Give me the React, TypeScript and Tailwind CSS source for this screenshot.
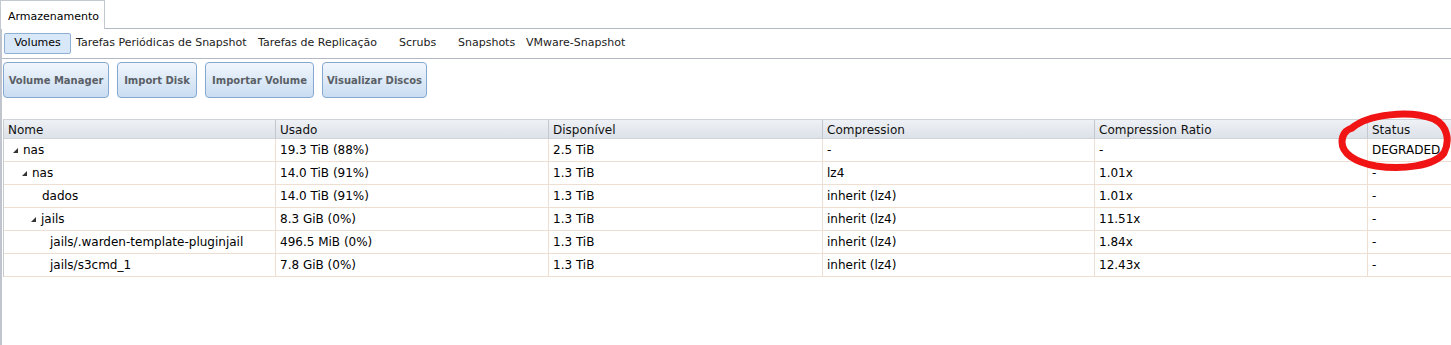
import React from 'react';

const subTabs = [
  { label: 'Tarefas Periódicas de Snapshot', w: 'w-[182px]' },
  { label: 'Tarefas de Replicação', w: 'w-[141px]' },
  { label: 'Scrubs', w: 'w-[59px]' },
  { label: 'Snapshots', w: 'w-[68px]' },
  { label: 'VMware-Snapshot', w: 'w-[110px]' },
];

const actions = [
  { label: 'Volume Manager', w: 'w-[106px]' },
  { label: 'Import Disk', w: 'w-[80px]' },
  { label: 'Importar Volume', w: 'w-[109px]' },
  { label: 'Visualizar Discos', w: 'w-[105px]' },
];

const columns = [
  { name: 'Nome', w: 'w-[272px]' },
  { name: 'Usado', w: 'w-[273px]' },
  { name: 'Disponível', w: 'w-[274px]' },
  { name: 'Compression', w: 'w-[272px]' },
  { name: 'Compression Ratio', w: 'w-[273px]' },
  { name: 'Status', w: 'flex-1' },
];

interface Row {
  name: string;
  pad: string;
  open?: boolean;
  cells: string[];
}

const rows: Row[] = [
  { name: 'nas', pad: 'pl-[8px]', open: true, cells: ['19.3 TiB (88%)', '2.5 TiB', '-', '-', 'DEGRADED'] },
  { name: 'nas', pad: 'pl-[17px]', open: true, cells: ['14.0 TiB (91%)', '1.3 TiB', 'lz4', '1.01x', '-'] },
  { name: 'dados', pad: 'pl-[38px]', cells: ['14.0 TiB (91%)', '1.3 TiB', 'inherit (lz4)', '1.01x', '-'] },
  { name: 'jails', pad: 'pl-[26px]', open: true, cells: ['8.3 GiB (0%)', '1.3 TiB', 'inherit (lz4)', '11.51x', '-'] },
  { name: 'jails/.warden-template-pluginjail', pad: 'pl-[46px]', cells: ['496.5 MiB (0%)', '1.3 TiB', 'inherit (lz4)', '1.84x', '-'] },
  { name: 'jails/s3cmd_1', pad: 'pl-[46px]', cells: ['7.8 GiB (0%)', '1.3 TiB', 'inherit (lz4)', '12.43x', '-'] },
];

function Expander() {
  return (
    <svg width="7" height="7" viewBox="0 0 7 7" className="mr-[4px] shrink-0">
      <path d="M6 1 L6 6 L1 6 Z" fill="#333" />
    </svg>
  );
}

export default function App() {
  return (
    <div className="relative w-[1451px] h-[345px] bg-white overflow-hidden text-[12px] text-black font-['DejaVu_Sans','Verdana',sans-serif]">
      {/* top tab strip */}
      <div className="h-[29px] flex items-end border-b border-[#b4b8c4]">
        <div className="h-[29px] w-[105px] -mb-px bg-white border border-b-0 border-[#c4c8d0] flex items-center pl-[7px] pt-[4px] text-[11px] whitespace-nowrap">
          Armazenamento
        </div>
      </div>

      <div className="border-l-2 border-[#c0c4cc] h-full">
        {/* sub tabs */}
        <div className="h-[30px] flex items-center pl-[2px] border-b border-[#b4b8c4] text-[11px] whitespace-nowrap">
          <div className="h-[21px] w-[67px] mr-[5px] flex items-center justify-center bg-[#d9e8f8] border border-[#8fb0d4] rounded-[2px]">
            Volumes
          </div>
          {subTabs.map((t) => (
            <div key={t.label} className={`${t.w} flex items-center justify-start text-[#222]`}>
              {t.label}
            </div>
          ))}
        </div>

        {/* action buttons */}
        <div className="flex gap-[8px] pl-[1px] pt-[3px] h-[60px]">
          {actions.map((a) => (
            <button
              key={a.label}
              className={`${a.w} h-[36px] rounded-[4px] border border-[#86a8d0] bg-gradient-to-b from-[#f1f6fc] to-[#c9ddf2] text-[10px] font-bold text-[#5a5f66] flex items-center justify-center whitespace-nowrap`}
            >
              {a.label}
            </button>
          ))}
        </div>

        {/* table */}
        <div className="ml-[1px] w-[1448px] border-l border-[#c8ccd2]">
          <div className="flex h-[20px] border-t border-[#a4a8ae] bg-gradient-to-b from-[#eef1f5] to-[#dde2e9] border-b border-[#cfd3d8]">
            {columns.map((c, i) => (
              <div
                key={c.name}
                className={`${c.w} flex items-center pl-[4px] pt-[1px] text-[#111] ${i < columns.length - 1 ? 'border-r border-[#c4c8ce]' : ''}`}
              >
                {c.name}
              </div>
            ))}
          </div>
          {rows.map((r, ri) => (
            <div key={ri} className="flex h-[23px] border-b border-[#eedfd2]">
              <div className={`w-[272px] flex items-center border-r border-[#eedfd2] ${r.pad}`}>
                {r.open && <Expander />}
                {r.name}
              </div>
              {r.cells.map((v, ci) => (
                <div
                  key={ci}
                  className={`${columns[ci + 1].w} flex items-center pl-[4px] ${ci < r.cells.length - 1 ? 'border-r border-[#eedfd2]' : ''}`}
                >
                  {v}
                </div>
              ))}
            </div>
          ))}
        </div>
      </div>

      {/* hand-drawn annotation */}
      <svg className="absolute left-[1330px] top-[104px] pointer-events-none" width="121" height="72" viewBox="0 0 121 72">
        <path
          d="M22 24 C38 10 80 6 104 15 C118 22 120 37 114 49 C104 62 72 66 46 62 C24 58 12 49 12 38 C12 30 16 26 22 24"
          fill="none"
          stroke="#f01414"
          strokeWidth="7"
          strokeLinecap="round"
        />
      </svg>
    </div>
  );
}
